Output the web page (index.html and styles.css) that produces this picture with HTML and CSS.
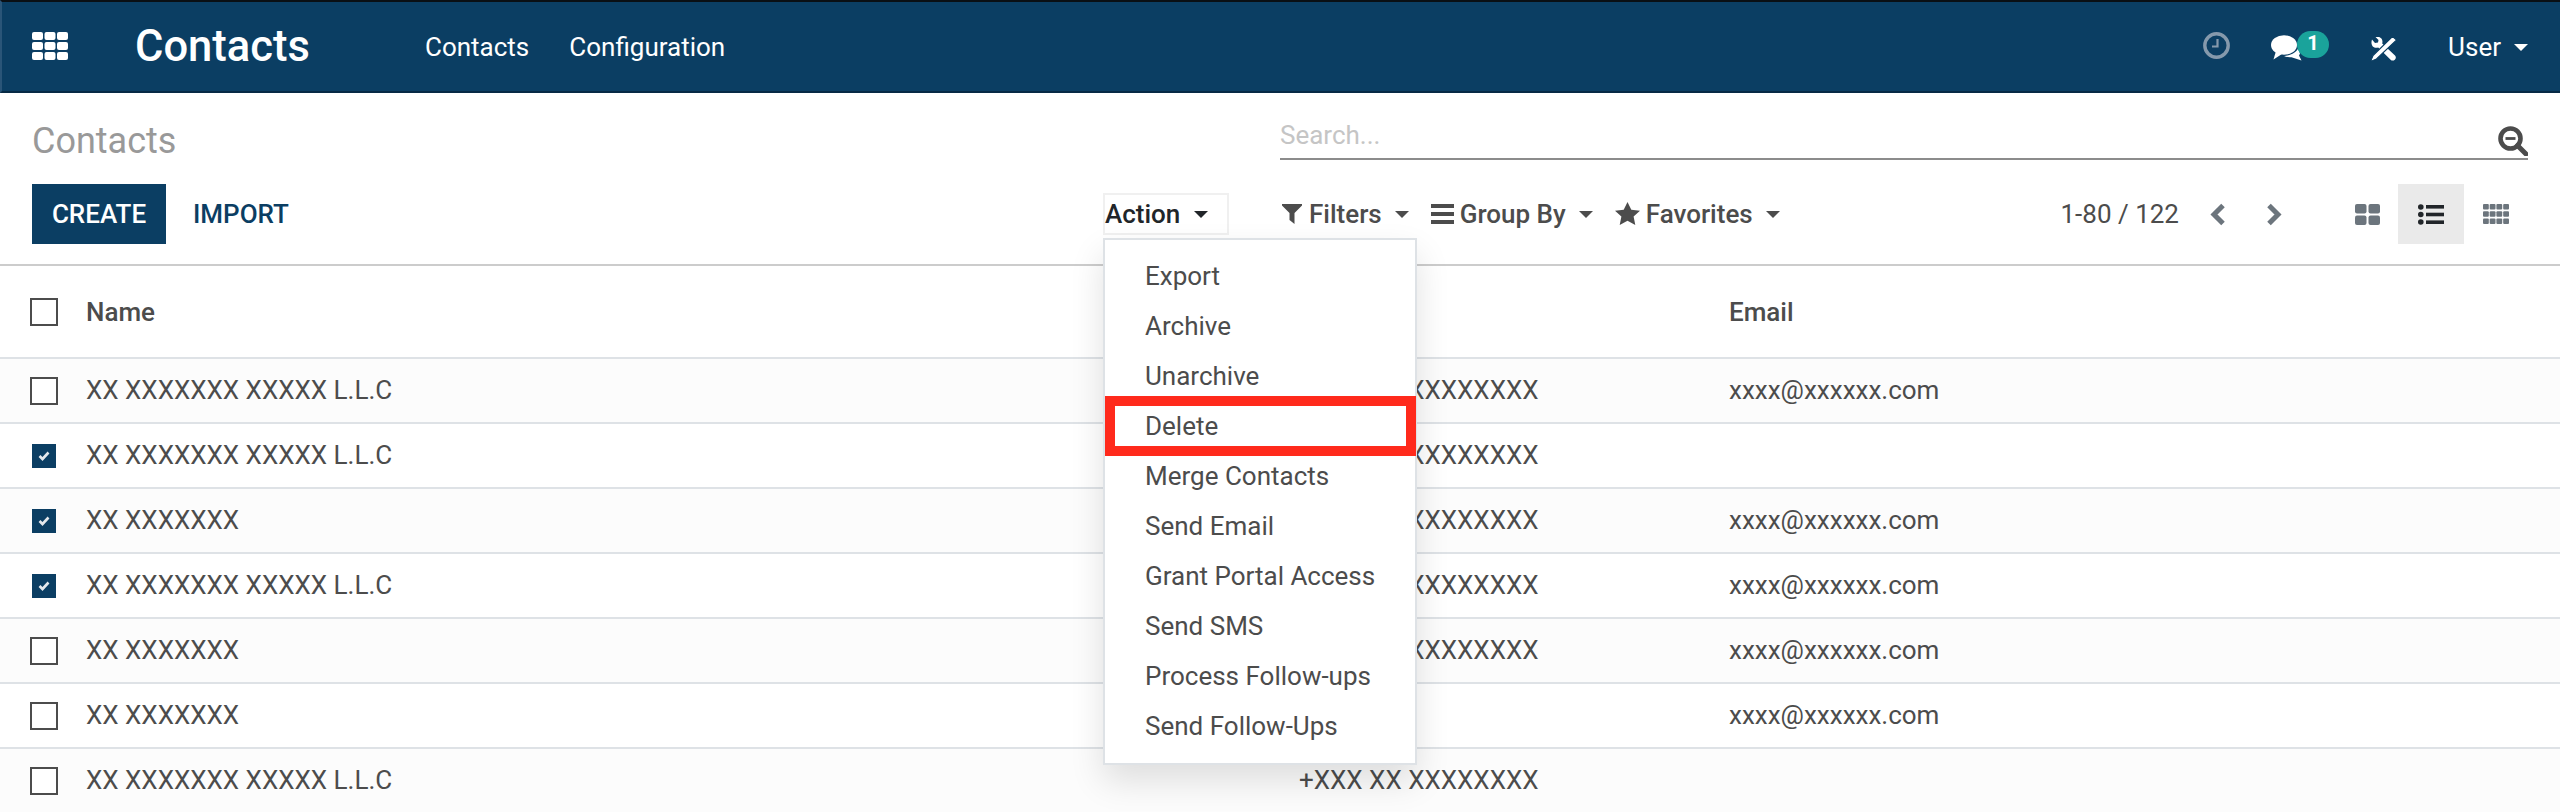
FILE: index.html
```html
<!DOCTYPE html>
<html lang="en">
<head>
<meta charset="utf-8">
<title>Contacts</title>
<link rel="stylesheet" href="styles.css">
</head>
<body>
<header class="navbar">
  <svg class="apps" viewBox="0 0 36 28" aria-hidden="true"><g fill="#fff"><rect x="0" y="0" width="11" height="8" rx="2"/><rect x="12.500" y="0" width="11" height="8" rx="2"/><rect x="25" y="0" width="11" height="8" rx="2"/><rect x="0" y="10" width="11" height="8" rx="2"/><rect x="12.500" y="10" width="11" height="8" rx="2"/><rect x="25" y="10" width="11" height="8" rx="2"/><rect x="0" y="20" width="11" height="8" rx="2"/><rect x="12.500" y="20" width="11" height="8" rx="2"/><rect x="25" y="20" width="11" height="8" rx="2"/></g></svg>
  <span class="brand">Contacts</span>
  <nav class="nav-links"><a>Contacts</a><a>Configuration</a></nav>
  <div class="systray">
    <svg class="clock" viewBox="0 0 27 27" aria-hidden="true"><circle cx="13.500" cy="13.500" r="11.700" fill="none" stroke="#8599ac" stroke-width="3.400"/><path d="M14.500 7v7.500H9" fill="none" stroke="#8599ac" stroke-width="2.200"/></svg>
    <div class="chat">
      <svg class="chat-icon" viewBox="0 0 31 26" aria-hidden="true"><ellipse cx="13" cy="10" rx="13" ry="9.800" fill="#fff"/><path fill="#fff" d="M5 16 2.500 24.500 11 19z"/><path fill="#fff" d="M27 13.500c-1.500 3.500-5.500 6.500-14 7.500 2 1.200 4.500 1.500 7.500 1.300l10 3.200-2.500-5 1-2z"/></svg>
      <span class="badge">1</span>
    </div>
    <svg class="tools" viewBox="0 0 25 24" aria-hidden="true"><path fill="#fff" d="M1 2.500 4 6l3-.5L7.500 3 4.500 0C7-.6 10 .2 11 2.500c.6 1.500.6 2.800.2 4L24 18.500c1.300 1.200 1 3-.2 4.200s-3 1.200-4.200 0L7.200 10.500c-2 .6-4 .3-5.400-1.100C.2 7.700.2 4.800 1 2.500z"/><path fill="#fff" stroke="#0b3e63" stroke-width="1.200" d="M21.500-.5 25.500 3 5.500 22 -.5 24.500 2 18.500z"/></svg>
    <span class="user">User<i class="caret"></i></span>
  </div>
</header>

<section class="panel">
  <div class="panel-left">
    <h1 class="title">Contacts</h1>
    <div class="panel-actions">
      <button class="btn btn-create">CREATE</button>
      <button class="btn btn-import">IMPORT</button>
      <div class="action">
        <span class="action-toggle">Action<i class="caret caret-dark"></i></span>
        <ul class="menu">
          <li>Export</li>
          <li>Archive</li>
          <li>Unarchive</li>
          <li class="marked">Delete</li>
          <li>Merge Contacts</li>
          <li>Send Email</li>
          <li>Grant Portal Access</li>
          <li>Send SMS</li>
          <li>Process Follow-ups</li>
          <li>Send Follow-Ups</li>
        </ul>
      </div>
    </div>
  </div>
  <div class="panel-right">
    <div class="search">
      <span class="placeholder">Search...</span>
      <svg class="search-icon" viewBox="0 0 30 30" aria-hidden="true"><circle cx="12.500" cy="12.500" r="10" fill="none" stroke="#4c4c4c" stroke-width="4.600"/><path d="M7.500 12.500h10" stroke="#4c4c4c" stroke-width="2.800"/><path d="m19.500 19.500 8.500 8.500" stroke="#4c4c4c" stroke-width="5" stroke-linecap="round"/></svg>
    </div>
    <div class="panel-tools">
      <div class="filter">
        <span class="fitem"><svg class="ficon funnel" viewBox="0 0 20 20"><path fill="#4c4c4c" d="M0 0h20v1.500L12.500 9v11L7.500 16V9L0 1.500z"/></svg>Filters<i class="caret caret-grey"></i></span>
        <span class="fitem"><svg class="ficon bars" viewBox="0 0 23 20"><path fill="#4c4c4c" d="M0 0h23v4H0zM0 8h23v4H0zM0 16h23v4H0z"/></svg>Group By<i class="caret caret-grey"></i></span>
        <span class="fitem"><svg class="ficon star" viewBox="0 0 25 23"><path fill="#4c4c4c" d="m12.500 0 3.800 7.800 8.700 1-6.400 5.800 1.700 8.400-7.800-4.200L4.700 23l1.700-8.400L0 8.800l8.700-1z"/></svg>Favorites<i class="caret caret-grey"></i></span>
      </div>
      <div class="pager">
        <span class="pager-text">1-80 / 122</span>
        <svg class="chev" viewBox="0 0 16 23"><path d="M13 2.500 4 11.500l9 9" fill="none" stroke="#6c757d" stroke-width="5"/></svg>
        <svg class="chev" viewBox="0 0 16 23"><path d="M3 2.500l9 9-9 9" fill="none" stroke="#6c757d" stroke-width="5"/></svg>
      </div>
      <div class="views">
        <span class="view"><svg class="vicon" viewBox="0 0 25 21"><g fill="#6c757d"><rect width="11.500" height="9.500" rx="2"/><rect x="13.500" width="11.500" height="9.500" rx="2"/><rect y="11.500" width="11.500" height="9.500" rx="2"/><rect x="13.500" y="11.500" width="11.500" height="9.500" rx="2"/></g></svg></span>
        <span class="view view-active"><svg class="vicon-list" viewBox="0 0 26 21"><g fill="#212529"><circle cx="2.800" cy="3" r="2.800"/><circle cx="2.800" cy="10.500" r="2.800"/><circle cx="2.800" cy="18" r="2.800"/><rect x="8" y="1" width="18" height="3.600"/><rect x="8" y="8.700" width="18" height="3.600"/><rect x="8" y="16.400" width="18" height="3.600"/></g></svg></span>
        <span class="view"><svg class="vicon-grid" viewBox="0 0 26 20"><g fill="#6c757d"><rect width="5.800" height="5.600" rx="1"/><rect x="6.700" width="5.800" height="5.600" rx="1"/><rect x="13.400" width="5.800" height="5.600" rx="1"/><rect x="20.200" width="5.800" height="5.600" rx="1"/><rect y="7.200" width="5.800" height="5.600" rx="1"/><rect x="6.700" y="7.200" width="5.800" height="5.600" rx="1"/><rect x="13.400" y="7.200" width="5.800" height="5.600" rx="1"/><rect x="20.200" y="7.200" width="5.800" height="5.600" rx="1"/><rect y="14.400" width="5.800" height="5.600" rx="1"/><rect x="6.700" y="14.400" width="5.800" height="5.600" rx="1"/><rect x="13.400" y="14.400" width="5.800" height="5.600" rx="1"/><rect x="20.200" y="14.400" width="5.800" height="5.600" rx="1"/></g></svg></span>
      </div>
    </div>
  </div>
</section>

<main class="list">
  <div class="row row-head"><span class="check"></span><span class="c-name">Name</span><span class="c-phone"></span><span class="c-email">Email</span></div>
  <div class="row odd"><span class="check"></span><span class="c-name">XX XXXXXXX XXXXX L.L.C</span><span class="c-phone">+XXX XX XXXXXXXX</span><span class="c-email">xxxx@xxxxxx.com</span></div>
  <div class="row"><span class="check on"><svg viewBox="0 0 12 10"><path d="M1.500 5 4.500 8l6-6.500" fill="none" stroke="#e4e8ec" stroke-width="2.600"/></svg></span><span class="c-name">XX XXXXXXX XXXXX L.L.C</span><span class="c-phone">+XXX XX XXXXXXXX</span><span class="c-email"></span></div>
  <div class="row odd"><span class="check on"><svg viewBox="0 0 12 10"><path d="M1.500 5 4.500 8l6-6.500" fill="none" stroke="#e4e8ec" stroke-width="2.600"/></svg></span><span class="c-name">XX XXXXXXX</span><span class="c-phone">+XXX XX XXXXXXXX</span><span class="c-email">xxxx@xxxxxx.com</span></div>
  <div class="row"><span class="check on"><svg viewBox="0 0 12 10"><path d="M1.500 5 4.500 8l6-6.500" fill="none" stroke="#e4e8ec" stroke-width="2.600"/></svg></span><span class="c-name">XX XXXXXXX XXXXX L.L.C</span><span class="c-phone">+XXX XX XXXXXXXX</span><span class="c-email">xxxx@xxxxxx.com</span></div>
  <div class="row odd"><span class="check"></span><span class="c-name">XX XXXXXXX</span><span class="c-phone">+XXX XX XXXXXXXX</span><span class="c-email">xxxx@xxxxxx.com</span></div>
  <div class="row"><span class="check"></span><span class="c-name">XX XXXXXXX</span><span class="c-phone"></span><span class="c-email">xxxx@xxxxxx.com</span></div>
  <div class="row odd"><span class="check"></span><span class="c-name">XX XXXXXXX XXXXX L.L.C</span><span class="c-phone">+XXX XX XXXXXXXX</span><span class="c-email"></span></div>
</main>
</body>
</html>
```
FILE: styles.css
```css
* { box-sizing: border-box; }
html, body { height: 812px; overflow: hidden; }
body { margin: 0; background: #fff; color: #4c4c4c; font-family: Roboto, "Liberation Sans", sans-serif; font-size: 26px; line-height: 39px; }

.navbar { height: 93px; display: flex; align-items: center; padding: 2px 32px 2px 30px; background: #0b3e63; border-top: 2px solid #0a0f14; border-left: 2px solid #2a5578; border-bottom: 2px solid #072a45; color: #fff; }
.apps { width: 36px; height: 28px; flex: none; margin-top: -2px; }
.brand { margin-left: 67px; width: 290px; font-size: 43.500px; font-weight: 500; }
.nav-links { display: flex; gap: 40px; padding-top: 2px; }
.systray { margin-left: auto; display: flex; align-items: center; }
.clock { width: 27px; height: 27px; margin-right: 41px; margin-top: -3px; }
.chat { display: flex; align-items: flex-start; margin-right: 42px; margin-top: -2px; }
.chat-icon { width: 31px; height: 26px; margin-top: 4px; }
.badge { width: 32px; height: 27px; margin-left: -5px; border-radius: 14px; background: #1aa39b; font-size: 20px; line-height: 24px; font-weight: 700; text-align: center; }
.tools { width: 25px; height: 24px; margin-top: 5px; margin-right: 52px; }
.user { display: flex; align-items: center; padding-top: 2px; }

.caret { display: block; width: 0; height: 0; margin-left: 13px; border: 7px solid transparent; border-bottom: 0; border-top-color: #fff; }
.caret-dark { border-top-color: #212529; }
.caret-grey { border-top-color: #4c4c4c; }

.panel { height: 173px; display: flex; border-bottom: 2px solid #ccc; }
.panel-left { width: 1280px; padding: 26px 0 0 32px; }
.title { margin: 0; height: 65px; font-size: 36px; line-height: 44px; font-weight: 400; color: #999; }
.panel-actions { display: flex; align-items: center; height: 60px; }
.btn { height: 60px; padding: 0; border: 0; font: 500 26px Roboto, sans-serif; }
.btn-create { width: 134px; background: #0b3e63; color: #fff; }
.btn-import { width: 95px; margin-left: 27px; background: transparent; color: #0b3e63; }
.action { position: relative; margin-left: auto; margin-right: 51px; }
.action-toggle { display: flex; align-items: center; width: 126px; height: 42px; border: 2px solid #f0f0f0; font-weight: 500; color: #212529; }
.action-toggle .caret { margin-left: 14px; }
.menu { position: absolute; z-index: 5; top: 45px; left: 0; width: 314px; height: 527px; margin: 0; padding: 11px 0; list-style: none; background: #fff; border: 2px solid #dee2e6; box-shadow: 0 16px 32px rgba(0,0,0,.12); }
.menu li { position: relative; height: 50px; padding-left: 40px; line-height: 50px; }
.menu .marked::after { content: ""; position: absolute; inset: -5px -1px -5px 0; border: 10px solid #ff2a1c; }

.panel-right { width: 1280px; padding: 0 32px 0 0; }
.search { display: flex; align-items: center; justify-content: space-between; height: 67px; border-bottom: 2px solid #8c8c8c; padding-top: 30px; }
.placeholder { margin-top: -11px; color: #c5c5c5; }
.search-icon { width: 30px; height: 30px; }
.panel-tools { display: flex; align-items: center; height: 60px; margin-top: 24px; }
.filter { display: flex; align-items: center; width: 700px; padding-left: 2px; font-weight: 500; white-space: nowrap; }
.fitem { display: flex; align-items: center; margin-right: 22px; }
.ficon { flex: none; margin-right: 7px; }
.funnel { width: 20px; height: 20px; }
.bars { width: 23px; height: 20px; margin-right: 6px; }
.star { width: 25px; height: 23px; margin-right: 6px; margin-top: -2px; }
.pager { display: flex; align-items: center; white-space: nowrap; }
.pager-text { width: 199px; text-align: right; }
.chev { width: 16px; height: 23px; flex: none; margin-left: 31px; }
.chev + .chev { margin-left: 40px; }
.views { display: flex; margin-left: auto; margin-right: -2px; }
.view { display: flex; align-items: center; justify-content: center; width: 66px; height: 60px; }
.view-active { background: #eaeaea; }
.vicon { width: 25px; height: 21px; margin-left: 4px; }
.vicon-list { width: 26px; height: 21px; }
.vicon-grid { width: 26px; height: 20px; margin-right: 2px; }

.list { display: block; }
.row { display: grid; grid-template-columns: 56px 1213px 430px 1fr; align-items: center; height: 65px; border-bottom: 2px solid #dee2e6; padding-left: 30px; white-space: nowrap; }
.row-head { height: 93px; padding-top: 1px; font-weight: 500; }
.odd { background: #fcfcfc; }
.check { display: flex; align-items: center; justify-content: center; width: 28px; height: 28px; border: 2px solid #4c4c4c; background: #fff; }
.check.on { width: 24px; height: 24px; margin-left: 2px; border: 0; background: #0b3e63; }
.check svg { width: 12px; height: 10px; }
```
